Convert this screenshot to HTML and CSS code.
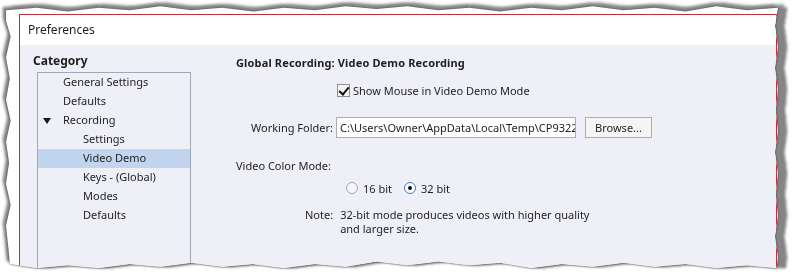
FILE: index.html
```html
<!DOCTYPE html>
<html lang="en">
<head>
  <meta charset="UTF-8" />
  <title>Preferences</title>
  <link rel="stylesheet" href="styles.css">
</head>
<body>

  <div class="shadow">
    <div class="paper">
      <div class="dialog">
        <div class="titlebar">Preferences</div>

        <div class="content">
          <!-- left: category tree -->
          <div class="sidebar">
            <div class="category-title">Category</div>
            <ul class="tree">
              <li class="node">General Settings</li>
              <li class="node">Defaults</li>
              <li class="node open"><span class="arrow"></span>Recording</li>
              <li class="node child">Settings</li>
              <li class="node child selected">Video Demo</li>
              <li class="node child">Keys - (Global)</li>
              <li class="node child">Modes</li>
              <li class="node child">Defaults</li>
            </ul>
          </div>

          <!-- right: settings panel -->
          <div class="panel">
            <h2 class="panel-title">Global Recording: Video Demo Recording</h2>

            <label class="check-row">
              <span class="checkbox checked"></span>
              Show Mouse in Video Demo Mode
            </label>

            <div class="folder-row">
              <span class="field-label">Working Folder:</span>
              <div class="text-input">C:\Users\Owner\AppData\Local\Temp\CP932258</div>
              <button class="btn">Browse...</button>
            </div>

            <div class="section-label">Video Color Mode:</div>

            <div class="radio-row">
              <label class="radio-option"><span class="radio"></span>16 bit</label>
              <label class="radio-option"><span class="radio checked"></span>32 bit</label>
            </div>

            <div class="note">
              <span class="note-label">Note:</span>
              <p>32-bit mode produces videos with higher quality<br>and larger size.</p>
            </div>
          </div>
        </div>
      </div>
    </div>
  </div>

</body>
</html>
```

FILE: styles.css
```css
:root {
  --body-bg: #eff0f7;
  --border-red: #b9323c;
  --tree-border: #a3a6b4;
  --select: #c2d5ee;
  --text: #1e1e1e;
}

* {
  box-sizing: border-box;
  margin: 0;
  padding: 0;
}

html, body {
  width: 796px;
  height: 274px;
  overflow: hidden;
  background: #ffffff;
}

body {
  font-family: 'Noto Sans', 'Open Sans', sans-serif;
  font-size: 11px;
  color: var(--text);
}

/* torn-paper screenshot frame */
.shadow {
  padding: 5px 0 0 6px;
  filter: drop-shadow(0 0 1px #444) drop-shadow(-3px -3px 1px #8a8a8a) drop-shadow(9px 0 1px #858585);
}

.paper {
  width: 772px;
  height: 263px;
  padding: 9px 0 0 13px;
  background: #ffffff;
  overflow: hidden;
  clip-path: polygon(
    0% 2%, 4% 1%, 8% 2.5%, 12% 1%, 16% 2%, 20% 0.5%, 24% 2%, 28% 1%, 32% 2.5%, 36% 1%,
    40% 2%, 44% 0.5%, 48% 1.5%, 52% 0.5%, 56% 2%, 60% 1%, 64% 2.5%, 68% 1%, 72% 2%,
    76% 0.5%, 80% 2%, 84% 1%, 88% 2.5%, 92% 0.5%, 96% 2%, 100% 1%,
    99.6% 8%, 100% 16%, 99.6% 24%, 100% 32%, 99.7% 40%, 100% 48%, 99.6% 56%, 100% 64%,
    99.7% 72%, 100% 80%, 99.6% 88%, 100% 96%, 99.8% 100%,
    96% 99%, 92% 100%, 88% 98.5%, 84% 99.5%, 80% 98%, 76% 99.5%, 72% 98.5%, 68% 100%,
    64% 98%, 60% 99%, 56% 97.5%, 52% 99%, 48% 97.5%, 44% 99.5%, 40% 98.5%, 36% 100%,
    32% 98.5%, 28% 99.5%, 24% 98%, 20% 99.5%, 16% 98.5%, 12% 100%, 8% 99%, 4% 100%, 0.5% 98.5%,
    0.3% 92%, 0% 84%, 0.6% 76%, 0% 68%, 0.4% 60%, 0% 52%, 0.6% 44%, 0% 36%, 0.5% 28%,
    0% 20%, 0.6% 12%, 0% 6%
  );
}

.dialog {
  width: 758px;
  height: 300px;
  border: 1px solid var(--border-red);
  background: var(--body-bg);
}

.titlebar {
  height: 30px;
  line-height: 30px;
  padding-left: 8px;
  font-size: 12px;
  background: #ffffff;
}

.content {
  display: flex;
}

/* category tree */
.sidebar {
  width: 216px;
  padding: 7px 0 0 13px;
}

.category-title {
  font-weight: bold;
  font-size: 12px;
  height: 19px;
  line-height: 17px;
}

.tree {
  list-style: none;
  margin: 1px 0 0 4px;
  width: 154px;
  height: 220px;
  border: 1px solid var(--tree-border);
  border-bottom: none;
}

.node {
  position: relative;
  height: 19px;
  line-height: 17px;
  padding-left: 25px;
}

.node.child {
  padding-left: 45px;
}

.node.selected {
  background: var(--select);
}

.arrow {
  position: absolute;
  left: 5px;
  top: 7px;
  border-left: 4px solid transparent;
  border-right: 4px solid transparent;
  border-top: 6px solid #1a1a1a;
}

/* settings panel */
.panel {
  padding-top: 9px;
  display: flex;
  flex-direction: column;
}

.panel-title {
  font-size: 11px;
  font-weight: bold;
  letter-spacing: 0.15px;
  height: 18px;
  line-height: 18px;
}

.check-row {
  display: flex;
  align-items: center;
  gap: 3px;
  margin: 9px 0 0 101px;
  height: 18px;
}

.checkbox {
  width: 13px;
  height: 13px;
  border: 1px solid #8e8f99;
  background: #f4f4f4;
  position: relative;
}

.checkbox.checked::after {
  content: "";
  position: absolute;
  left: 3px;
  top: 0px;
  width: 4px;
  height: 8px;
  border-right: 2px solid #111;
  border-bottom: 2px solid #111;
  transform: rotate(40deg);
}

.folder-row {
  display: flex;
  align-items: center;
  margin: 18px 0 0 15px;
  height: 21px;
}

.field-label {
  width: 85px;
}

.text-input {
  width: 240px;
  height: 21px;
  line-height: 19px;
  padding-left: 3px;
  border: 1px solid #abadb3;
  background: #ffffff;
  white-space: nowrap;
  overflow: hidden;
}

.btn {
  margin-left: 9px;
  width: 67px;
  height: 21px;
  border: 1px solid #adadad;
  background: #f5f5f5;
  font-family: inherit;
  font-size: 11px;
  color: var(--text);
}

.section-label {
  margin-top: 19px;
  height: 18px;
  line-height: 18px;
}

.radio-row {
  display: flex;
  gap: 12px;
  margin: 4px 0 0 110px;
  height: 18px;
  align-items: center;
}

.radio-option {
  display: flex;
  align-items: center;
  gap: 5px;
}

.radio {
  width: 12px;
  height: 12px;
  border-radius: 50%;
  border: 1px solid #a2a4ad;
  background: #f6f6f6;
  position: relative;
}

.radio.checked {
  border-color: #3a7bbf;
  background: #ffffff;
}

.radio.checked::after {
  content: "";
  position: absolute;
  left: 3px;
  top: 3px;
  width: 4px;
  height: 4px;
  border-radius: 50%;
  background: #111;
}

.note {
  display: flex;
  margin: 11px 0 0 69px;
  gap: 7px;
  line-height: 14px;
}
```
